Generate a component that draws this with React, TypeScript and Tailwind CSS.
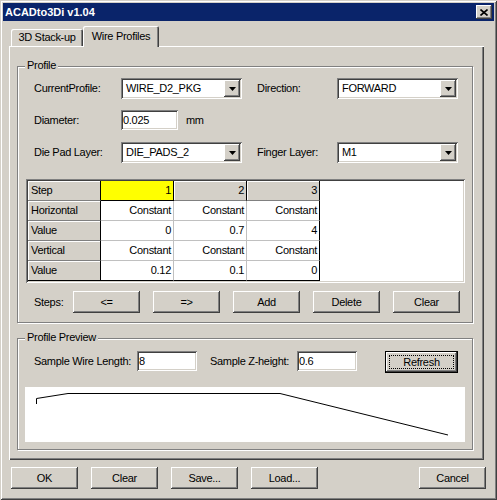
import React from 'react';

const raised =
  'shadow-[inset_-1px_-1px_#404040,inset_1px_1px_#ffffff,inset_-2px_-2px_#808080,inset_2px_2px_#d4d0c8]';
const sunken =
  'shadow-[inset_1px_1px_#808080,inset_-1px_-1px_#ffffff,inset_2px_2px_#404040,inset_-2px_-2px_#d4d0c8]';

const Btn = ({ label }: { label: string }) => (
  <button className={`w-[67px] h-[22px] bg-[#d4d0c8] ${raised} text-[11px] leading-[22px] text-black`}>
    {label}
  </button>
);

const Combo = ({ value }: { value: string }) => (
  <div className={`flex h-[21px] w-[121px] bg-white p-[2px] ${sunken}`}>
    <div className="flex-1 pl-[3px] leading-[17px]">{value}</div>
    <div className={`flex h-[17px] w-[16px] items-center justify-center bg-[#d4d0c8] ${raised}`}>
      <svg width="7" height="4" viewBox="0 0 7 4">
        <polygon points="0,0 7,0 3.5,4" fill="#000" />
      </svg>
    </div>
  </div>
);

const Field = ({ value, w }: { value: string; w: string }) => (
  <div className={`${w} h-[20px] bg-white pl-[2px] leading-[20px] ${sunken}`}>{value}</div>
);

const Group = ({ title, className, children }: { title: string; className: string; children: React.ReactNode }) => (
  <div className={`border border-[#808080] shadow-[inset_1px_1px_#ffffff,1px_1px_#ffffff] ${className}`}>
    <div className="-mt-[8px] ml-[7px] w-fit bg-[#d4d0c8] px-[2px] leading-[13px]">{title}</div>
    {children}
  </div>
);

const rows = [
  ['Step', '1', '2', '3'],
  ['Horizontal', 'Constant', 'Constant', 'Constant'],
  ['Value', '0', '0.7', '4'],
  ['Vertical', 'Constant', 'Constant', 'Constant'],
  ['Value', '0.12', '0.1', '0'],
];

const StepGrid = () => (
  <div className={`ml-[8px] mt-[16px] h-[104px] w-[439px] bg-white p-[2px] ${sunken}`}>
    {rows.map((row, r) => (
      <div key={r} className="flex h-[20px]">
        {row.map((cell, c) => {
          const last = r === rows.length - 1;
          let cls = '';
          if (c === 0) {
            cls = `bg-[#d4d0c8] pl-[3px] text-left border-r border-r-black border-b shadow-[inset_1px_1px_#ffffff] ${
              last ? 'border-b-black' : 'border-b-[#808080]'
            }`;
          } else if (r === 0) {
            cls =
              c === 1
                ? 'bg-[#ffff00] pr-[2px] text-right border-r border-b border-black'
                : 'bg-[#d4d0c8] pr-[2px] text-right border-r border-r-black border-b border-b-[#808080] shadow-[inset_1px_1px_#ffffff]';
          } else {
            cls = `bg-white pr-[2px] text-right border-r border-b ${c === 3 ? 'border-r-black' : 'border-r-[#c0c0c0]'} ${
              last ? 'border-b-black' : 'border-b-[#c0c0c0]'
            }`;
          }
          return (
            <div key={c} className={`h-[20px] w-[73px] leading-[19px] ${cls}`}>
              {cell}
            </div>
          );
        })}
      </div>
    ))}
  </div>
);

export default function App() {
  return (
    <div
      className="flex h-[500px] w-[497px] flex-col bg-[#d4d0c8] p-[3px] font-['Liberation_Sans',Arial,sans-serif] text-[11px] tracking-[-0.3px] text-black shadow-[inset_1px_1px_#d4d0c8,inset_-1px_-1px_#404040,inset_2px_2px_#ffffff,inset_-2px_-2px_#808080]"
    >
      {/* title bar */}
      <div className="flex h-[18px] items-center justify-between bg-[#0a246a] pl-[2px] pr-[2px]">
        <span className="font-bold tracking-normal text-white">ACADto3Di v1.04</span>
        <div className={`flex h-[14px] w-[16px] items-center justify-center bg-[#d4d0c8] ${raised}`}>
          <svg width="8" height="7" viewBox="0 0 8 7">
            <path d="M0.5 0.5 L7.5 6.5 M7.5 0.5 L0.5 6.5" stroke="#000" strokeWidth="1.6" />
          </svg>
        </div>
      </div>

      {/* tabs */}
      <div className="ml-[6px] mt-[5px] flex h-[20px] items-end pl-[2px]">
        <div className="flex h-[17px] w-[72px] items-center justify-center rounded-t-[2px] shadow-[inset_1px_1px_#ffffff,inset_-1px_0_#404040,inset_-2px_0_#808080]">
          3D Stack-up
        </div>
        <div className="relative z-10 -mb-[1px] flex h-[21px] w-[76px] items-center justify-center rounded-t-[2px] bg-[#d4d0c8] pb-[1px] shadow-[inset_1px_1px_#ffffff,inset_-1px_0_#404040,inset_-2px_0_#808080]">
          Wire Profiles
        </div>
      </div>

      {/* tab panel */}
      <div className="ml-[6px] h-[414px] w-[475px] shadow-[inset_1px_1px_#ffffff,inset_-1px_-1px_#404040,inset_-2px_-2px_#808080] pt-[20px] pl-[8px]">
        <Group title="Profile" className="h-[257px] w-[456px]">
          <div className="ml-[16px] mt-[6px] flex h-[21px] items-center">
            <span className="w-[87px]">CurrentProfile:</span>
            <Combo value="WIRE_D2_PKG" />
            <span className="ml-[15px] w-[80px]">Direction:</span>
            <Combo value="FORWARD" />
          </div>
          <div className="ml-[16px] mt-[11px] flex h-[20px] items-center">
            <span className="w-[87px]">Diameter:</span>
            <Field value="0.025" w="w-[57px]" />
            <span className="ml-[8px]">mm</span>
          </div>
          <div className="ml-[16px] mt-[12px] flex h-[21px] items-center">
            <span className="w-[87px]">Die Pad Layer:</span>
            <Combo value="DIE_PADS_2" />
            <span className="ml-[15px] w-[80px]">Finger Layer:</span>
            <Combo value="M1" />
          </div>
          <StepGrid />
          <div className="ml-[16px] mt-[8px] flex h-[22px] items-center gap-[13px]">
            <span className="w-[26px]">Steps:</span>
            <Btn label="<=" />
            <Btn label="=>" />
            <Btn label="Add" />
            <Btn label="Delete" />
            <Btn label="Clear" />
          </div>
        </Group>

        <Group title="Profile Preview" className="mt-[15px] h-[112px] w-[456px]">
          <div className="ml-[16px] mt-[7px] flex h-[22px] items-start">
            <span className="w-[103px] leading-[20px]">Sample Wire Length:</span>
            <Field value="8" w="w-[60px]" />
            <span className="ml-[13px] w-[87px] leading-[20px]">Sample Z-height:</span>
            <Field value="0.6" w="w-[60px]" />
            <button className="ml-[28px] h-[22px] w-[73px] border border-black bg-[#d4d0c8] p-[3px] shadow-[inset_-1px_-1px_#404040,inset_1px_1px_#ffffff,inset_-2px_-2px_#808080]">
              <div className="flex h-full items-center justify-center border border-dotted border-black text-[11px] tracking-[-0.3px]">
                Refresh
              </div>
            </button>
          </div>
          <div className="ml-[7px] mt-[14px] h-[55px] w-[440px] bg-white">
            <svg width="440" height="55" viewBox="0 0 440 55">
              <polyline
                points="11.5,17 11.5,11.5 43,6.5 255,6.5 423,48"
                fill="none"
                stroke="#000"
                strokeWidth="1"
              />
            </svg>
          </div>
        </Group>
      </div>

      {/* dialog buttons */}
      <div className="ml-[8px] mr-[8px] mt-[7px] flex gap-[13px]">
        <Btn label="OK" />
        <Btn label="Clear" />
        <Btn label="Save..." />
        <Btn label="Load..." />
        <div className="ml-auto">
          <Btn label="Cancel" />
        </div>
      </div>
    </div>
  );
}
